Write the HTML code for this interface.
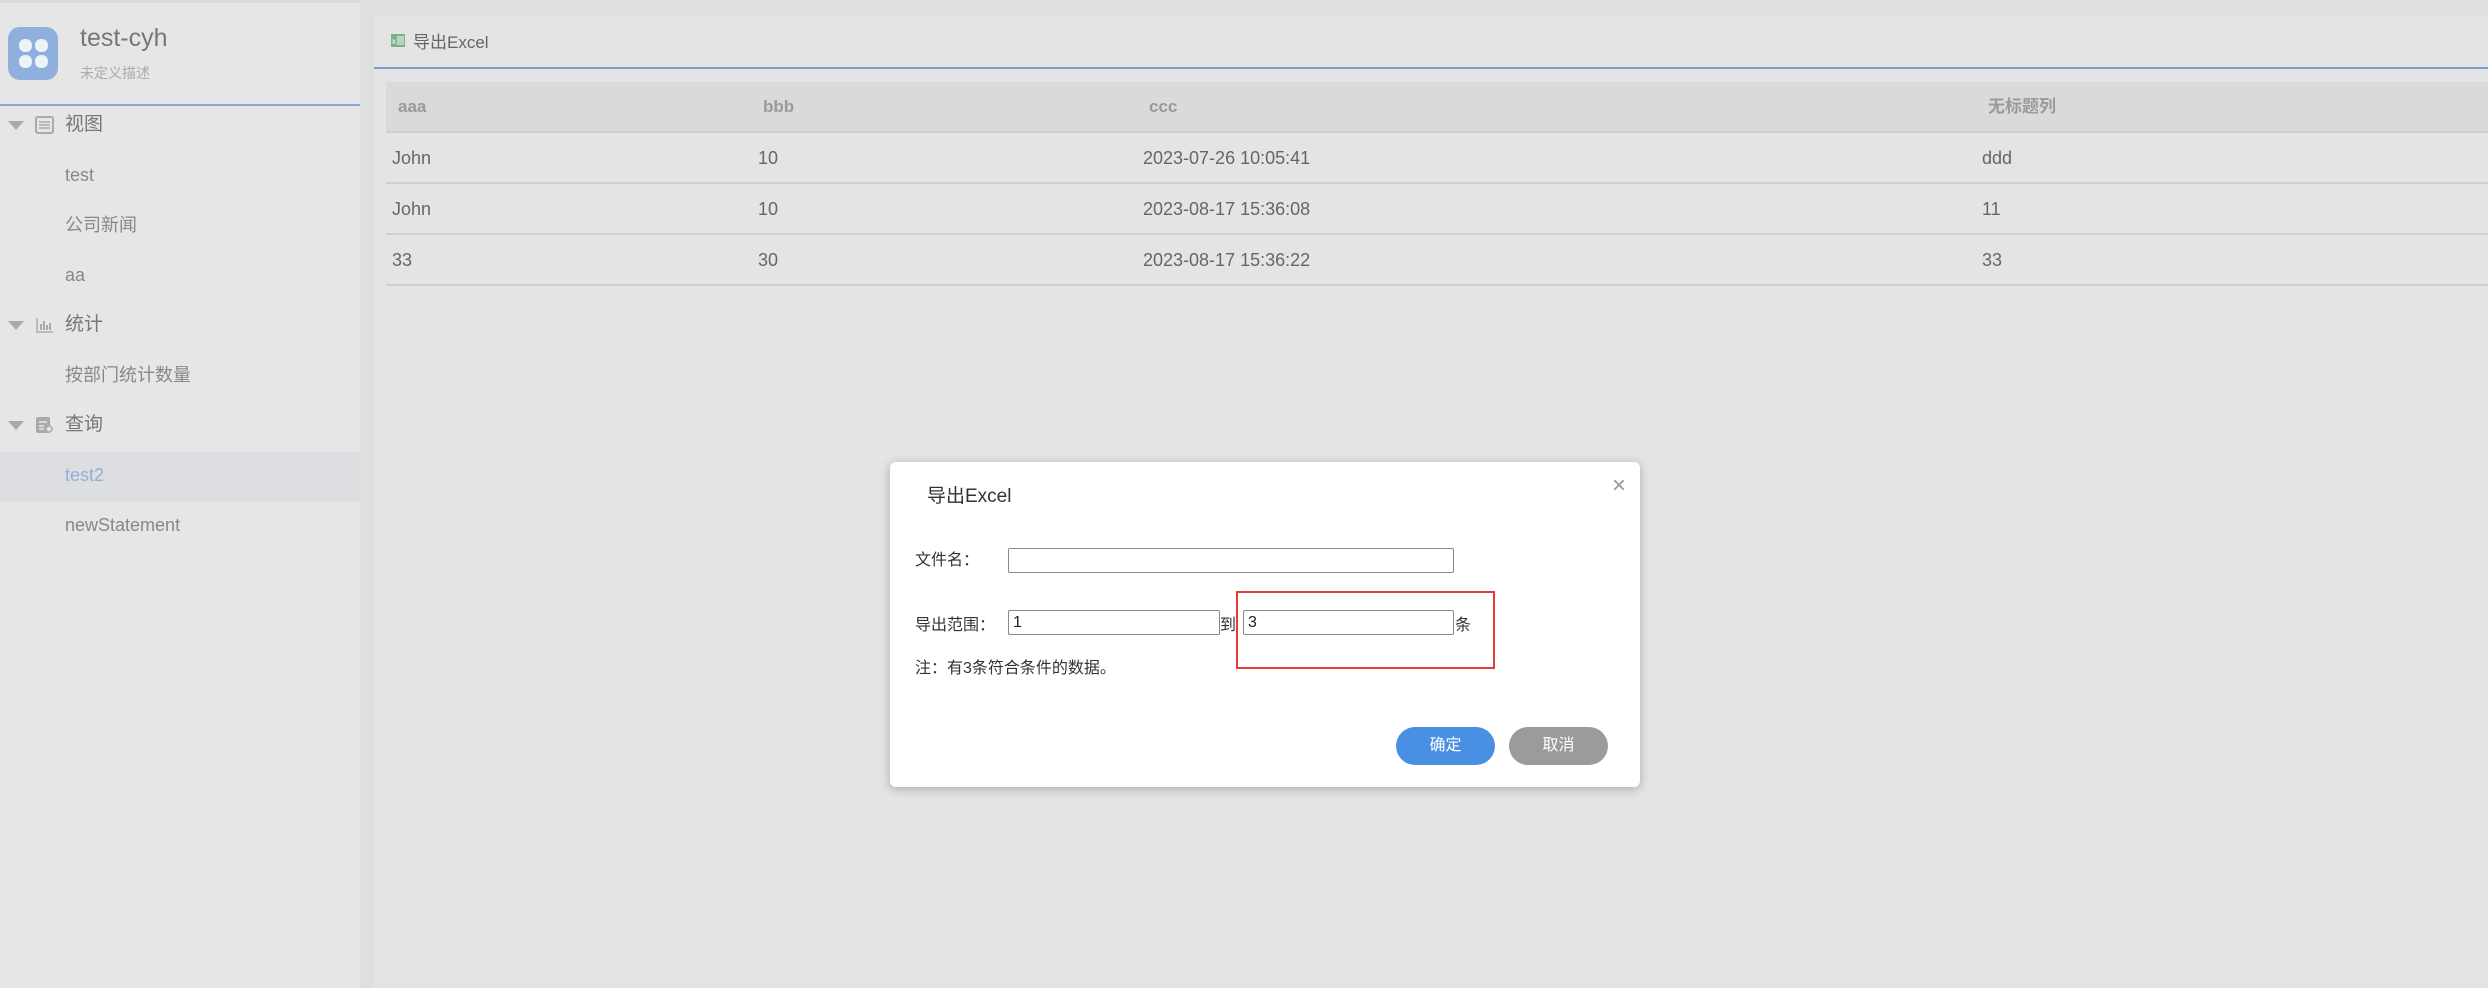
<!DOCTYPE html>
<html><head><meta charset="utf-8"><style>
*{margin:0;padding:0;box-sizing:border-box}
body{width:2488px;height:988px;overflow:hidden;background:#dfdfdf;font-family:"Liberation Sans","Noto Sans CJK SC",sans-serif;position:relative}
.abs{position:absolute;white-space:nowrap}
#side{position:absolute;left:0;top:0;width:360px;height:988px;background:#e6e6e6;border-top:3px solid #dadada}
.mi{position:absolute;left:0;width:360px;height:50px;line-height:50px;font-size:18px;color:#888;padding-left:65px}
.grp{color:#777;font-size:19px}
.arrow{position:absolute;left:8px;top:21px;width:0;height:0;border-left:8px solid transparent;border-right:8px solid transparent;border-top:9px solid #aaa}
.gi{position:absolute;left:35px;top:16px;width:19px;height:18px}
#panel{position:absolute;left:374px;top:16px;width:2114px;height:972px;background:#e4e4e4}
.th{position:absolute;top:0;line-height:50px;font-size:17px;font-weight:bold;color:#9a9a9a}
.row{position:absolute;left:12px;width:2102px;height:51px;border-bottom:2px solid #cfcfcf;font-size:18px;color:#666;line-height:50px}
.row span{position:absolute}
#modal{position:absolute;left:890px;top:462px;width:750px;height:325px;background:#fff;border-radius:6px;box-shadow:0 2px 10px rgba(0,0,0,.25);font-size:16px;color:#333}
.inp{position:absolute;height:25px;border:1px solid #888;border-radius:2px;background:#fff;font-size:16px;line-height:23px;padding-left:4px;color:#222}
.btn{position:absolute;top:265px;width:99px;height:38px;border-radius:19px;color:#fff;text-align:center;line-height:38px;font-size:16px}
</style></head><body>
<div id="side">
  <div class="abs" style="left:8px;top:24px;width:50px;height:53px;border-radius:12px;background:#8fb0dc">
    <div class="abs" style="left:11px;top:12px;width:13px;height:13px;border-radius:6px;background:#eef3fa"></div>
    <div class="abs" style="left:27px;top:12px;width:13px;height:13px;border-radius:6px;background:#eef3fa"></div>
    <div class="abs" style="left:11px;top:28px;width:13px;height:13px;border-radius:6px;background:#eef3fa"></div>
    <div class="abs" style="left:27px;top:28px;width:13px;height:13px;border-radius:6px;background:#eef3fa"></div>
  </div>
  <div class="abs" style="left:80px;top:21px;font-size:25px;color:#777">test-cyh</div>
  <div class="abs" style="left:80px;top:60px;font-size:14px;color:#aaa">未定义描述</div>
  <div class="abs" style="left:0;top:101px;width:360px;height:2px;background:#8aaad6"></div>
  <div class="mi grp" style="top:97px"><div class="arrow"></div><svg class="gi" viewBox="0 0 19 18"><rect x="1" y="1" width="17" height="16" rx="2" fill="none" stroke="#aaa" stroke-width="2"/><path d="M4 6h11M4 9h11M4 12h11" stroke="#aaa" stroke-width="1.5"/></svg>视图</div>
  <div class="mi" style="top:147px">test</div>
  <div class="mi" style="top:197px">公司新闻</div>
  <div class="mi" style="top:247px">aa</div>
  <div class="mi grp" style="top:297px"><div class="arrow"></div><svg class="gi" viewBox="0 0 19 18"><path d="M2 2v14h16" fill="none" stroke="#bbb" stroke-width="2"/><path d="M6 14V8M9 14V5M12 14V9M15 14V7" stroke="#aaa" stroke-width="2"/></svg>统计</div>
  <div class="mi" style="top:347px">按部门统计数量</div>
  <div class="mi grp" style="top:397px"><div class="arrow"></div><svg class="gi" viewBox="0 0 19 18"><rect x="1" y="1" width="14" height="16" rx="2" fill="#aaa"/><path d="M4 6h8M4 10h5M4 13h5" stroke="#e6e6e6" stroke-width="1.5"/><circle cx="14" cy="13" r="3" fill="#e6e6e6" stroke="#aaa" stroke-width="1.5"/></svg>查询</div>
  <div class="mi" style="top:449px;background:#dcdee1;color:#8fb0dc;line-height:46px">test2</div>
  <div class="mi" style="top:497px">newStatement</div>
</div>
<div id="panel">
  <svg class="abs" style="left:17px;top:17px" width="14" height="15" viewBox="0 0 14 15"><rect x="0" y="1" width="14" height="13" fill="#7fb08a"/><rect x="6" y="3" width="7" height="9" fill="#b8d6be"/><text x="1" y="11" font-size="8" fill="#fff" font-family="Liberation Sans">x</text></svg>
  <div class="abs" style="left:39px;top:12px;font-size:17px;color:#666">导出Excel</div>
  <div class="abs" style="left:0;top:51px;width:2114px;height:2px;background:#7a9cc8"></div>
  <div class="abs" style="left:12px;top:66px;width:2102px;height:51px;background:#dadada;border-bottom:2px solid #cfcfcf">
    <div class="th" style="left:12px">aaa</div><div class="th" style="left:377px">bbb</div><div class="th" style="left:763px">ccc</div><div class="th" style="left:1602px">无标题列</div>
  </div>
  <div class="row" style="top:117px"><span style="left:6px">John</span><span style="left:372px">10</span><span style="left:757px">2023-07-26 10:05:41</span><span style="left:1596px">ddd</span></div>
  <div class="row" style="top:168px"><span style="left:6px">John</span><span style="left:372px">10</span><span style="left:757px">2023-08-17 15:36:08</span><span style="left:1596px">11</span></div>
  <div class="row" style="top:219px"><span style="left:6px">33</span><span style="left:372px">30</span><span style="left:757px">2023-08-17 15:36:22</span><span style="left:1596px">33</span></div>
</div>
<div id="modal">
  <div class="abs" style="left:37px;top:19px;font-size:19px;color:#333">导出Excel</div>
  <div class="abs" style="left:722px;top:10px;font-size:24px;color:#999">×</div>
  <div class="abs" style="left:25px;top:84px">文件名：</div>
  <div class="inp" style="left:118px;top:86px;width:446px"></div>
  <div class="abs" style="left:25px;top:149px">导出范围：</div>
  <div class="inp" style="left:118px;top:148px;width:212px">1</div>
  <div class="abs" style="left:330px;top:149px">到</div>
  <div class="inp" style="left:353px;top:148px;width:211px">3</div>
  <div class="abs" style="left:565px;top:149px">条</div>
  <div class="abs" style="left:346px;top:129px;width:259px;height:78px;border:2px solid #e83a3a"></div>
  <div class="abs" style="left:25px;top:192px">注：有3条符合条件的数据。</div>
  <div class="btn" style="left:506px;background:#4a90e2">确定</div>
  <div class="btn" style="left:619px;background:#9b9b9b">取消</div>
</div>
</body></html>
